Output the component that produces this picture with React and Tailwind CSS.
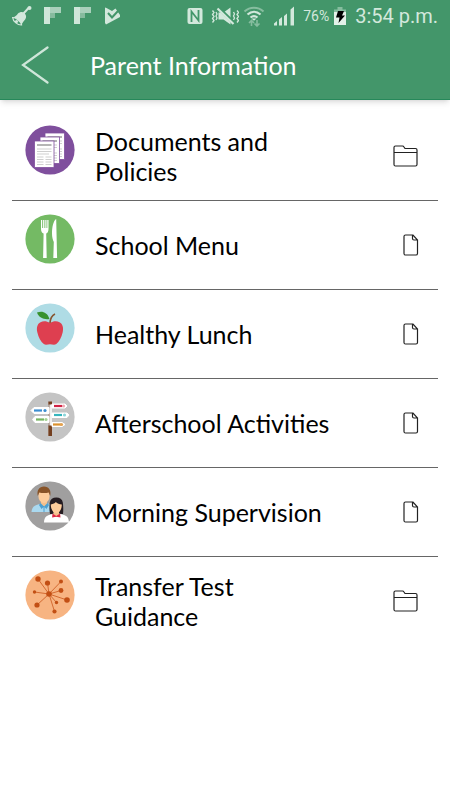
const DocumentsIcon = () => (
  <svg viewBox="0 0 50 50" className="size-[50px]" aria-hidden="true">
    <circle cx="25" cy="25" r="24.6" fill="#7f4f9d" />
    {[[20, 8], [15, 12], [9.5, 16]].map(([x, y]) => (
      <g key={x} transform={`translate(${x} ${y})`}>
        <rect width="19.5" height="26.5" fill="#fff" stroke="#7f4f9d" strokeWidth=".8" />
        <path d="M2.5 4h14.5" stroke="#b5b5b5" strokeWidth="2" />
        <path d="M2.5 8h14.5M2.5 10.5h14.5M2.5 13h12M2.5 16h6.5M11 16h6M2.5 18.5h6.5M11 18.5h6M2.5 21h6.5M11 21h6M2.5 23.5h6.5M11 23.5h6" stroke="#cfcfcf" strokeWidth="1" />
      </g>
    ))}
  </svg>
);

const MenuIcon = () => (
  <svg viewBox="0 0 50 50" className="size-[50px]" aria-hidden="true">
    <circle cx="25" cy="25" r="24.6" fill="#74ba64" />
    <path fill="#fff" d="M16 6h1.2v8h.9V6h1.3v8h.9V6h1.2v8h.8V6h1.2v9c0 2.4-.9 3.800-2.300 4.600L21.700 44h-3.600l.5-24.400c-1.600-.8-2.600-2.200-2.600-4.600z" />
    <path fill="#fff" d="M31.200 5c-2.800 1.800-4.200 8-4.200 14.500 0 3.500.8 6.500 1.800 8.500L28.300 44h3.800z" />
  </svg>
);

const AppleIcon = () => (
  <svg viewBox="0 0 50 50" className="size-[50px]" aria-hidden="true">
    <circle cx="25" cy="25" r="24.6" fill="#afdce5" />
    <path fill="#de3f50" d="M25 20c3-1.800 6.500-2.200 9.500-.8 3.200 1.600 4.200 5.500 3.200 10-1.200 5.500-3.500 9.500-6.400 11.800-2 1.400-4.300.2-6.300.2s-4.200 1.200-6.200-.2c-3-2.300-5.300-6.300-6.500-11.800-1-4.500 0-8.400 3.200-10 3-1.400 6.500-1 9.500.8z" />
    <path d="M25 20c.3-4 1.700-7.500 5-9" fill="none" stroke="#87552f" strokeWidth="1.6" />
    <path fill="#37912f" d="M12 9.500c5-1.700 10-.8 12.500 6.500-5.500.8-10.500-1-12.500-6.500z" />
  </svg>
);

const signs = [
  { points: "27,12 40,12 42,14 40,16 27,16", color: "#d02245", x: 29, y: 14, dot: "#efa6b0", dx: 38.5 },
  { points: "24,15.5 9,15.5 6,18.5 9,21.5 24,21.5", color: "#3d8ed0", x: 9, y: 18.5, dot: "#3d8ed0", dx: 20 },
  { points: "27,21 42,21 44,23 42,25.5 27,25.5", color: "#35b5bd", x: 29, y: 23, dot: "#8cd5da", dx: 39.5 },
  { points: "24,24.5 10,24.5 7.5,27.5 10,30.5 24,30.5", color: "#76b560", x: 11, y: 27.5, dot: "#a4d394", dx: 21 },
  { points: "27,30.5 37,30.5 40,32.5 37,34.5 27,34.5", color: "#db912f", x: 28, y: 32.5, dot: "#e3a250", dx: 36.5 },
];

const SignpostIcon = () => (
  <svg viewBox="0 0 50 50" className="size-[50px]" aria-hidden="true">
    <circle cx="25" cy="25" r="24.6" fill="#c4c4c4" />
    <path d="M23.3 10.5h3.7V44h-3.7z" fill="#efefef" />
    <path d="M23.3 9.500h3.7v3h-3.7zM23.3 33.500h3.7V44h-3.7z" fill="#733f20" />
    <path d="M24 12v22" stroke="#6e4935" strokeWidth=".8" />
    {signs.map((s) => (
      <g key={s.y}>
        <polygon points={s.points} fill="#fff" stroke="#fff" strokeLinejoin="round" />
        <path d={`M${s.x} ${s.y}h8`} stroke={s.color} strokeWidth="2.2" />
        <circle cx={s.dx} cy={s.y} r="1.6" fill={s.dot} />
      </g>
    ))}
  </svg>
);

const PeopleIcon = () => (
  <svg viewBox="0 0 50 50" className="size-[50px]" aria-hidden="true">
    <circle cx="25" cy="25" r="24.6" fill="#a09f9f" />
    <path fill="#aad9f0" d="M6.500 31c.3-4 2-6 5-7l6-2h4l6 2c2 .8 3 3 3 7z" />
    <path fill="#f4bf8c" d="M16 18h6v5l-3 3-3-3z" />
    <ellipse cx="19" cy="15" rx="5.6" ry="7" fill="#fdcc9b" />
    <path fill="#885327" d="M12.800 15c-1.200-5.500 1.300-9.400 6.200-9.400s7.400 3.900 6.200 9.400l-1.400-3.500c-3 .8-6.600.8-9.600 0z" />
    <path fill="#4d9fd0" d="M15.500 22l3.500 3.500-2.500 2.500-2.500-4zM22.500 22l-3.500 3.500 2.500 2.500 2.500-4zM18.500 25h1v6h-1z" />
    <path fill="#251c21" d="M25 33c-1-5.500-.4-10-.2-11.500.5-3.200 3-5 6.500-5s6 1.800 6.500 5c.2 1.500.8 6 .2 11.500z" />
    <path fill="#fff" d="M19 41.500c.3-4.500 2-6.500 5-7.400l5-1.600h5l5 1.600c3 .9 4.700 2.900 5 7.400z" />
    <path fill="#f4bf8c" d="M28.500 29h5.500v5l-2.700 2-2.800-2z" />
    <path fill="#fdcc9b" d="M25.800 23.500c2.500-.4 4-1.200 5-2.500 1.500 1.400 3.500 2.200 6 2.500 0 5-2.300 8.500-5.500 8.500s-5.500-3.500-5.500-8.500z" />
    <path fill="#dc2642" d="M27.500 32.500l3.800 2.500 3.800-2.500.4 4-4.200-.8-4.200.8z" />
  </svg>
);

const nodes = [
  [13, 9, 2.7], [22.5, 13, 2.6], [36, 11.5, 2], [36, 20.5, 2.4], [9.5, 22, 1.7],
  [42, 30, 2.8], [12, 35, 2.6], [31.5, 32.5, 1.7], [29.5, 41.5, 2.1],
];

const NetworkIcon = () => (
  <svg viewBox="0 0 50 50" className="size-[50px]" aria-hidden="true">
    <circle cx="25" cy="25" r="24.6" fill="#f7b482" />
    {nodes.map(([x, y, r]) => (
      <g key={`${x}-${y}`}>
        <path d={`M24 24L${x} ${y}`} stroke="#cf6228" strokeWidth=".9" />
        <circle cx={x} cy={y} r={r} fill="#c24f14" />
      </g>
    ))}
    <circle cx="24" cy="24" r="2.8" fill="#c24f14" />
  </svg>
);

const FolderIcon = () => (
  <svg viewBox="0 0 26 22" className="h-[22px] w-[26px]" fill="none" stroke="#222" strokeWidth="1.2" aria-hidden="true">
    <path d="M1 19.500V2.500Q1 1 2.500 1H9.500Q10.500 1 11 2L12 3.500H22.500Q24 3.500 24 5V19.500Q24 21 22.500 21H2.500Q1 21 1 19.500zM1 7.500H24" />
  </svg>
);

const FileIcon = () => (
  <svg viewBox="0 0 16 22" className="h-[22px] w-4" fill="none" stroke="#222" strokeWidth="1.2" aria-hidden="true">
    <path d="M2.500 1H10L14.500 6V19.500Q14.500 21 13 21H2.500Q1 21 1 19.500V2.500Q1 1 2.500 1zM9.500 1V4.500Q9.500 6 11 6H14.500" />
  </svg>
);

const FlipboardIcon = () => (
  <svg viewBox="0 0 18 18" className="size-[18px]" aria-hidden="true">
    <path d="M0 0h6v17H0z" fill="#cfe6d9" />
    <path d="M6 0h11v6H6z" fill="#a9d0bb" />
    <path d="M6 6h5v5H6z" fill="#86bb9e" />
  </svg>
);

const StatusBar = () => (
  <div className="flex h-8 items-center justify-between px-3 font-['Roboto',sans-serif] text-[#d3e8dc]">
    <div className="flex items-center gap-3">
      <svg viewBox="0 0 20 20" className="size-5" fill="currentColor" aria-hidden="true">
        <path d="M11.500 7.500L17 1.500" stroke="currentColor" strokeWidth="2" />
        <circle cx="17.500" cy="2" r="2" />
        <path d="M6 7.500c2.500-2 4.500-2 6.500-.2s2 4 .8 6c-1.300 2-2.800 3-3.800 5.700L.5 11.500C3 11 4.500 9.500 6 7.500z" />
        <path d="M.6 11.500c3-.3 9 4.500 9 7.500-3.800.3-8.600-3.500-9-7.500z" fill="#43966a" stroke="currentColor" strokeWidth="1.200" />
        <circle cx="4.500" cy="15.500" r="1.600" />
      </svg>
      <FlipboardIcon />
      <FlipboardIcon />
      <svg viewBox="0 0 18 18" className="size-[18px]" aria-hidden="true">
        <path d="M1 .5L2.500 1 8 4l3.500-2.500L16 8v2L2 17.500 1 16z" fill="currentColor" />
        <path d="M4 6l4 4.500 6-6.500" fill="none" stroke="#43966a" strokeWidth="2" />
      </svg>
    </div>
    <div className="flex items-center gap-1">
      <svg viewBox="0 0 16 18" className="mr-1 h-[18px] w-4" aria-hidden="true">
        <rect x=".5" y="1" width="15" height="16" rx="2" fill="currentColor" />
        <path d="M4.500 15V4.500l7 9V3" fill="none" stroke="#43966a" strokeWidth="1.800" />
      </svg>
      <svg viewBox="0 0 28 20" className="h-5 w-7" fill="none" stroke="currentColor" aria-hidden="true">
        <path d="M7.500 6.500h5l7-5v17l-7-5h-5z" fill="currentColor" stroke="none" />
        <path d="M6.500 1L23 17" stroke="#43966a" strokeWidth="3.500" />
        <path d="M6.500 2.500L22.500 18" strokeWidth="2.200" />
        <path d="M1.500 4.500l1.500 2-1.500 2L3 10.500l-1.500 2L3 14.500l-1.500 2M5 6l1 2-1 2 1 2-1 2M26 4.500l1.500 2-1.500 2 1.500 2-1.500 2 1.500 2-1.500 2M22.500 6l1 2-1 2 1 2-1 2" strokeWidth="1.300" />
      </svg>
      <svg viewBox="0 0 22 22" className="h-[22px] w-[22px]" fill="none" aria-hidden="true">
        <path d="M1.500 6.500c5.500-5 13.500-5 19 0" stroke="#86bd9f" strokeWidth="2" />
        <path d="M4.500 9.500c4-3.500 9-3.500 13 0M7.500 12.500c2.200-1.700 4.800-1.700 7 0" stroke="currentColor" strokeWidth="2.200" />
        <path d="M8.500 13.500h5L11 15.800z" fill="currentColor" />
        <path d="M8.500 21v-5M6 18l2.500-2.500 2.500 2.500M14 15v5.500M11.500 18.500l2.500 2.500 2.500-2.500" stroke="#86bd9f" strokeWidth="1.600" />
      </svg>
      <svg viewBox="0 0 22 22" className="ml-1 h-[22px] w-[22px]" fill="currentColor" aria-hidden="true">
        <path d="M1 18.500L4 16v4.500H1zM6 14.500l3-2.500v8.500H6zM11 11l3-2.500v12h-3zM17.500 4.500l3.500-3v19h-3.500z" />
      </svg>
      <span className="ml-1 text-sm">76%</span>
      <svg viewBox="0 0 14 20" className="h-5 w-[14px]" aria-hidden="true">
        <path d="M4.500 1h5v2.500H13V7H1V3.500h3.500z" fill="#86bd9f" />
        <path d="M1 6h12v13H1z" fill="#e3f1e8" />
        <path d="M5 5h6L9 9.500h3L5.500 17l1-5.500H3z" fill="#000" />
      </svg>
      <span className="ml-1 text-xl">3:54 p.m.</span>
    </div>
  </div>
);

const items = [
  { title: "Documents and Policies", Icon: DocumentsIcon, folder: true },
  { title: "School Menu", Icon: MenuIcon },
  { title: "Healthy Lunch", Icon: AppleIcon },
  { title: "Afterschool Activities", Icon: SignpostIcon },
  { title: "Morning Supervision", Icon: PeopleIcon },
  { title: "Transfer Test Guidance", Icon: NetworkIcon, folder: true },
];

const InfoRow = ({ title, Icon, folder }) => (
  <li className="border-b border-[#666] last:border-b-0">
    <a href="#" className="flex h-[88px] items-center pl-[13px] pr-[19px]">
      <span className="shrink-0 self-start pt-[13px]">
        <Icon />
      </span>
      <span className="ml-5 flex-1 text-[25px] leading-[30px] text-black">{title}</span>
      <span className="flex w-20 shrink-0 justify-end">
        {folder ? <FolderIcon /> : <FileIcon />}
      </span>
    </a>
  </li>
);

export default function App() {
  return (
    <div className="min-h-screen bg-white font-['Lato',sans-serif]">
      <header className="border-b border-[#26885a] bg-[#43966a] shadow-md">
        <StatusBar />
        <div className="flex h-[67px] items-center pl-5">
          <button type="button" aria-label="Back" className="text-[#cfe6d9]">
            <svg viewBox="0 0 30 40" className="h-10 w-[30px]" fill="none" stroke="currentColor" strokeWidth="2.2" aria-hidden="true">
              <path d="M27.500 1.500L3 19l24.500 17.500" strokeLinecap="round" />
            </svg>
          </button>
          <h1 className="ml-10 text-[25px] text-white">Parent Information</h1>
        </div>
      </header>
      <main className="px-3 pt-3">
        <ul>
          {items.map((item) => (
            <InfoRow key={item.title} {...item} />
          ))}
        </ul>
      </main>
    </div>
  );
}
